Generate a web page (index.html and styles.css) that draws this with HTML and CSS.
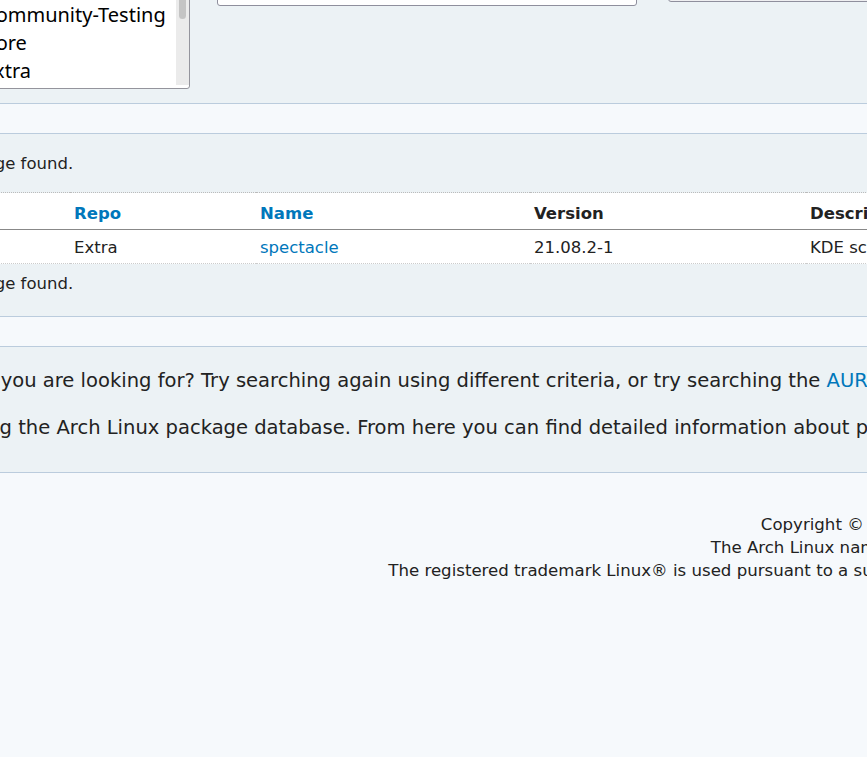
FILE: index.html
```html
<!DOCTYPE html>
<html lang="en">
<head>
<meta charset="utf-8">
<title>Arch Linux - Package Search</title>
<link rel="stylesheet" href="styles.css">
</head>
<body>
<div class="page">
  <div class="box filters">
    <div class="listbox">
      <div class="options">
        <div class="option">Community</div>
        <div class="option">Community-Testing</div>
        <div class="option">Core</div>
        <div class="option">Extra</div>
      </div>
      <div class="scrollbar"><div class="thumb"></div></div>
    </div>
    <div class="textbox"></div>
    <div class="selectbox"></div>
  </div>

  <div class="box results-box">
    <p class="stats">1 matching package found.</p>
    <table class="results">
      <colgroup>
        <col class="c-arch"><col class="c-repo"><col class="c-name"><col class="c-ver"><col class="c-desc"><col class="c-upd"><col class="c-flag">
      </colgroup>
      <thead>
        <tr>
          <th><a href="#">Arch</a></th>
          <th><a href="#">Repo</a></th>
          <th><a href="#">Name</a></th>
          <th>Version</th>
          <th>Description</th>
          <th><a href="#">Last Updated</a></th>
          <th>Flag Date</th>
        </tr>
      </thead>
      <tbody>
        <tr>
          <td>x86_64</td>
          <td>Extra</td>
          <td><a href="#">spectacle</a></td>
          <td>21.08.2-1</td>
          <td>KDE screenshot capture utility</td>
          <td>2021-10-07</td>
          <td></td>
        </tr>
      </tbody>
    </table>
    <p class="stats stats-bottom">1 matching package found.</p>
  </div>

  <div class="box info-box">
    <p class="first">Can't find what you are looking for? Try searching again using different criteria, or try searching the <a href="#">AUR</a> to see if the package can be found there.</p>
    <p class="second">You are browsing the Arch Linux package database. From here you can find detailed information about packages located in the official supported repositories. For unsupported packages, browse the <a href="#">Arch User Repository (AUR)</a>.</p>
  </div>

  <div class="footer">
    <p>Copyright © 2002-2021 Judd Vinet, Aaron Griffin and Levente Polyák.<br>
    The Arch Linux name and logo are recognized trademarks. Some rights reserved.<br>
    The registered trademark Linux® is used pursuant to a sublicense from LMI, the exclusive licensee of Linus Torvalds, owner of the mark on a world-wide basis.</p>
  </div>
</div>
</body>
</html>
```

FILE: styles.css
```css
html, body {
  margin: 0;
  padding: 0;
  height: 100%;
  overflow: hidden;
  background: #f6f9fc;
}

body {
  font-family: "DejaVu Sans", sans-serif;
  font-size: 16px;
  color: #222;
}

a {
  color: #07b;
  text-decoration: none;
}

.page {
  width: 2440px;
  margin: -41px 0 0 -180px;
}

.box {
  background: #ecf2f5;
  border: 1px solid #bcd;
}

.box + .box {
  margin-top: 29px;
}

/* filter form */
.filters {
  display: flex;
  align-items: flex-start;
  padding: 12px 0 14px 149px;
}

.listbox {
  display: flex;
  width: 220px;
  height: 117px;
  box-sizing: border-box;
  background: #fff;
  border: 1px solid #94949c;
  border-radius: 3px;
  padding: 0 0 3px 0;
  font-family: "Noto Sans", sans-serif;
  font-size: 20px;
  color: #000;
}

.options {
  flex: 1;
  padding-left: 12px;
}

.option {
  line-height: 28px;
  height: 28px;
  white-space: nowrap;
}

.scrollbar {
  width: 13px;
  background: #ebebeb;
}

.thumb {
  width: 7px;
  height: 46px;
  margin-left: 3px;
  background: #c4c4c4;
  border-radius: 4px;
}

.textbox {
  margin-left: 27px;
  width: 420px;
  height: 34px;
  box-sizing: border-box;
  background: #fff;
  border: 1px solid #8f8f9d;
  border-radius: 3px;
}

.selectbox {
  margin-left: 31px;
  width: 260px;
  height: 30px;
  box-sizing: border-box;
  background: #efeff1;
  border: 1px solid #8f8f9d;
  border-radius: 3px;
}

/* results */
.results-box {
  padding: 0 26px;
  font-size: 16.5px;
}

.stats {
  margin: 20px 0 18px;
  line-height: 20px;
}

.stats-bottom {
  margin: 10px 0 22px;
}

.results {
  border-collapse: collapse;
  table-layout: fixed;
  width: 1859px;
}

.c-arch { width: 223px; }
.c-repo { width: 186px; }
.c-name { width: 274px; }
.c-ver { width: 276px; }
.c-desc { width: 600px; }
.c-upd { width: 150px; }
.c-flag { width: 150px; }

.results thead tr {
  border-top: 1px dotted #bbb;
  border-bottom: 1px solid #888;
}

.results tbody tr {
  border-bottom: 1px dotted #ccc;
}

.results th {
  text-align: left;
  font-weight: bold;
  background: #fff;
  padding: 11px 4px 5px 4px;
  line-height: 20px;
  white-space: nowrap;
}

.results td {
  background: #fff;
  padding: 8px 4px 5px 4px;
  line-height: 20px;
  white-space: nowrap;
}

/* info */
.info-box {
  padding: 0 25px;
  font-size: 19.55px;
}

.info-box p {
  margin: 23px 0 0;
  line-height: 22px;
  white-space: nowrap;
}

.info-box p.second {
  margin: 25px 0 33px;
}

/* footer */
.footer {
  padding-left: 18px;
}

.footer p {
  margin: 40px 0 0;
  text-align: center;
  line-height: 23px;
  font-size: 16.6px;
  color: #222;
}
```
